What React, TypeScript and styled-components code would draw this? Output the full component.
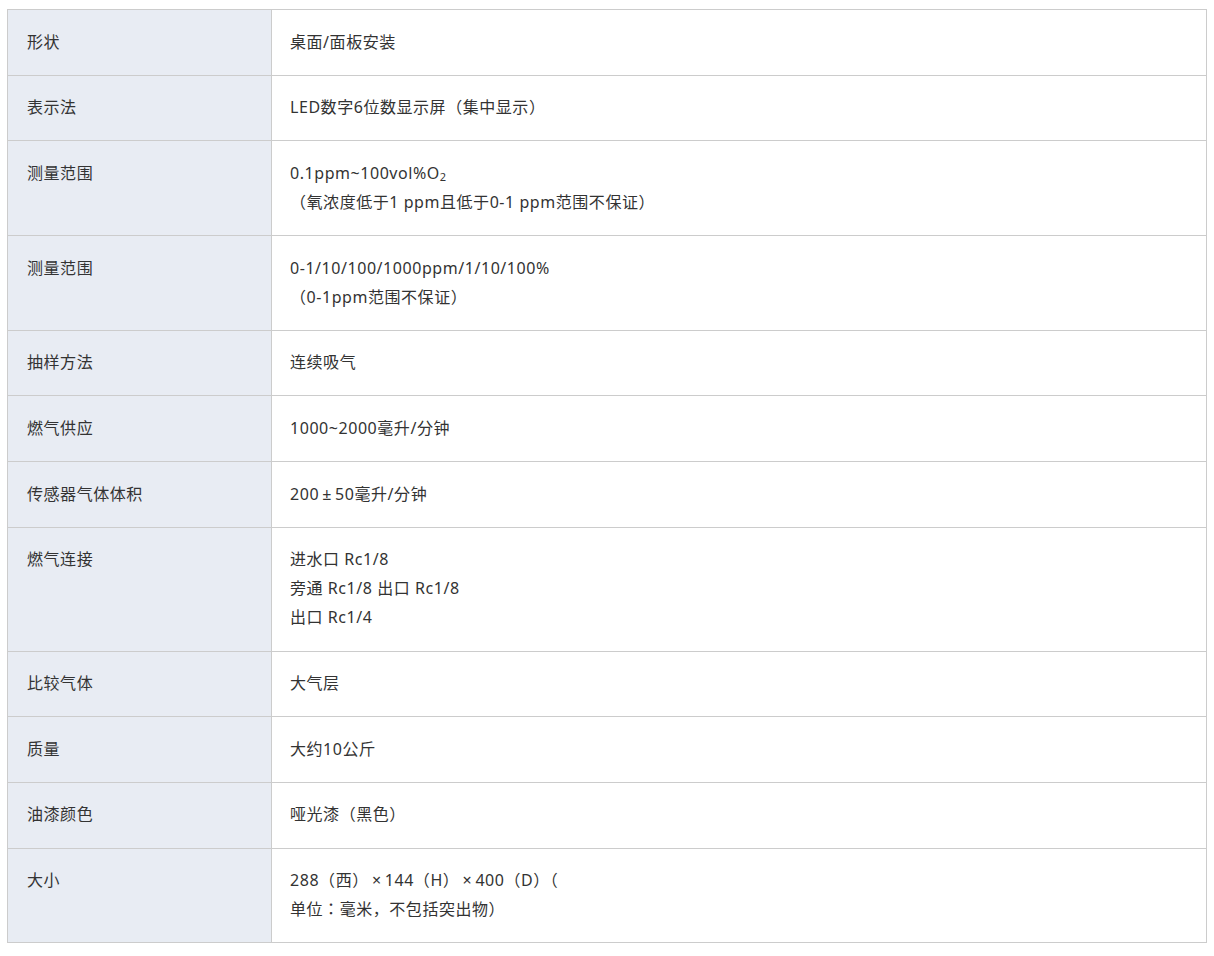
import React from "react";
import styled, { createGlobalStyle } from "styled-components";

const GlobalStyle = createGlobalStyle`
  html, body { margin: 0; padding: 0; background: #ffffff; }
  body {
    padding: 9px 7px;
    font-family: "Noto Sans", "Noto Sans CJK JP", sans-serif;
    color: #333333;
  }
`;

const SpecTable = styled.table`
  width: 1200px;
  border-collapse: collapse;
  table-layout: fixed;
  font-size: 16px;
  line-height: 29px;
  letter-spacing: 0.55px;
`;

const HeadCell = styled.th`
  box-sizing: border-box;
  width: 264px;
  background: #e8ecf3;
  border: 1px solid #cccccc;
  padding: 17.5px 18px 18.2px 19px;
  text-align: left;
  vertical-align: top;
  font-weight: 400;
  color: #333333;
`;

const ValueCell = styled.td`
  border: 1px solid #cccccc;
  padding: 17.5px 18px 18.2px 18px;
  vertical-align: top;
  color: #333333;
`;

const Line = styled.div``;

const Sub = styled.sub`
  font-size: 11px;
  line-height: 0;
  vertical-align: -2px;
`;

const Wide = styled.span`
  display: inline-block;
  width: 1em;
  text-align: center;
`;

type Row = { label: string; lines: React.ReactNode[] };

const rows: Row[] = [
  { label: "形状", lines: ["桌面/面板安装"] },
  { label: "表示法", lines: ["LED数字6位数显示屏（集中显示）"] },
  {
    label: "测量范围",
    lines: [
      <>0.1ppm~100vol%O<Sub>2</Sub></>,
      "（氧浓度低于1 ppm且低于0-1 ppm范围不保证）",
    ],
  },
  {
    label: "测量范围",
    lines: ["0-1/10/100/1000ppm/1/10/100%", "（0-1ppm范围不保证）"],
  },
  { label: "抽样方法", lines: ["连续吸气"] },
  { label: "燃气供应", lines: ["1000~2000毫升/分钟"] },
  {
    label: "传感器气体体积",
    lines: [<>200<Wide>±</Wide>50毫升/分钟</>],
  },
  {
    label: "燃气连接",
    lines: ["进水口 Rc1/8", "旁通 Rc1/8 出口 Rc1/8", "出口 Rc1/4"],
  },
  { label: "比较气体", lines: ["大气层"] },
  { label: "质量", lines: ["大约10公斤"] },
  { label: "油漆颜色", lines: ["哑光漆（黑色）"] },
  {
    label: "大小",
    lines: [
      <>288（西）<Wide>×</Wide>144（H）<Wide>×</Wide>400（D）（</>,
      "单位：毫米，不包括突出物）",
    ],
  },
];

export default function App() {
  return (
    <>
      <GlobalStyle />
      <SpecTable>
        <tbody>
          {rows.map((r, i) => (
            <tr key={i}>
              <HeadCell>{r.label}</HeadCell>
              <ValueCell>
                {r.lines.map((l, j) => (
                  <Line key={j}>{l}</Line>
                ))}
              </ValueCell>
            </tr>
          ))}
        </tbody>
      </SpecTable>
    </>
  );
}
